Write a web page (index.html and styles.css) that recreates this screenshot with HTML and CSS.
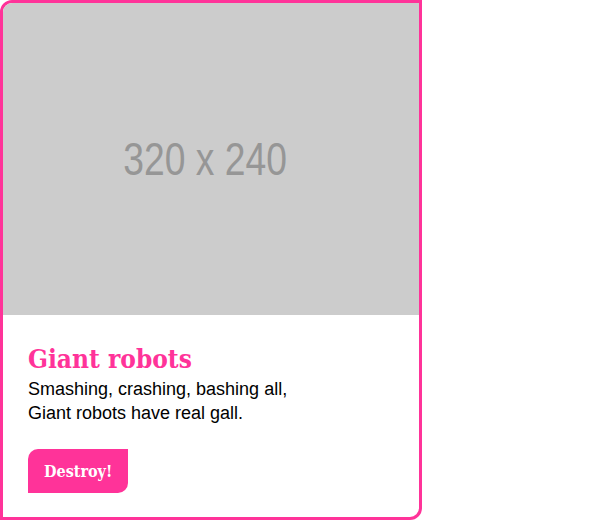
FILE: index.html
```html
<!DOCTYPE html>
<html lang="en">
<head>
<meta charset="utf-8">
<title>Giant robots</title>
<link rel="stylesheet" href="styles.css">
</head>
<body>
<article class="card">
  <div class="card-media"><span class="card-media-label">320 x 240</span></div>
  <div class="card-body">
    <h2 class="card-title">Giant robots</h2>
    <p class="card-text">Smashing, crashing, bashing all,<br>Giant robots have real gall.</p>
    <button class="card-button" type="button">Destroy!</button>
  </div>
</article>
</body>
</html>
```
FILE: styles.css
```css
html, body {
  margin: 0;
  padding: 0;
  background: #ffffff;
}

.card {
  box-sizing: border-box;
  width: 422px;
  height: 520px;
  border: 3px solid #ff3399;
  border-radius: 12px 0 12px 0;
  overflow: hidden;
  display: flex;
  flex-direction: column;
  background: #ffffff;
}

.card-media {
  height: 312px;
  background: #cccccc;
  display: flex;
  align-items: center;
  justify-content: center;
}

.card-media-label {
  margin-right: 12px;
  font-family: "Liberation Sans", Arial, sans-serif;
  font-size: 46px;
  color: #969696;
  transform: scaleX(0.81);
  white-space: nowrap;
}

.card-body {
  padding: 28px 25px 24px;
}

.card-title {
  margin: 0;
  font-family: "DejaVu Serif", serif;
  font-stretch: condensed;
  font-weight: bold;
  font-size: 26px;
  line-height: 32px;
  color: #ff3399;
}

.card-text {
  margin: 2px 0 24px;
  font-family: "Liberation Sans", Arial, sans-serif;
  font-size: 18px;
  line-height: 24px;
  color: #000000;
}

.card-button {
  display: block;
  height: 44px;
  padding: 0 16px;
  border: 0;
  border-radius: 10px 0 10px 0;
  background: #ff3399;
  color: #ffffff;
  font-family: "DejaVu Serif", serif;
  font-stretch: condensed;
  font-weight: bold;
  font-size: 16px;
}
```
